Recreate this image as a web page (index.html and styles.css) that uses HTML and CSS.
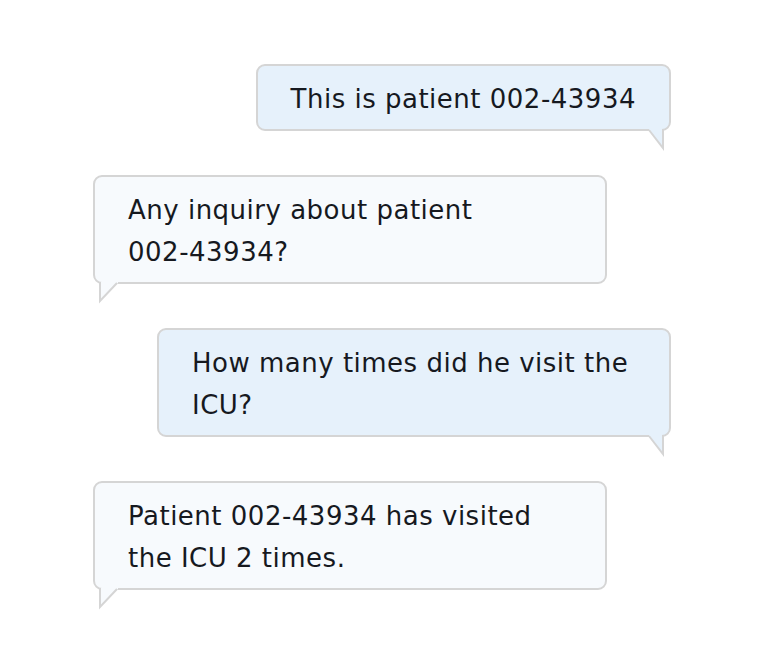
FILE: index.html
```html
<!DOCTYPE html>
<html lang="en">
<head>
<meta charset="utf-8">
<title>Chat</title>
<link rel="stylesheet" href="styles.css">
</head>
<body>
<main class="chat">
  <div class="bubble user">
    <p class="text">This is patient <span class="id">002-43934</span></p>
    <svg class="tail" width="16" height="20" viewBox="0 0 16 20"><polygon points="0,0 15,0 15,1 14,19 0,1" class="tail-fill"/><polyline points="0,1 14,19 14,0" class="tail-line"/></svg>
  </div>
  <div class="bubble bot">
    <p class="text">Any inquiry about patient <span class="id">002-43934?</span></p>
    <svg class="tail" width="20" height="20" viewBox="0 0 20 20"><polygon points="1,0 20,0 20,1 2,19" class="tail-fill"/><polyline points="19,1 2,19 2,0" class="tail-line"/></svg>
  </div>
  <div class="bubble user">
    <p class="text">How many times did he visit the ICU?</p>
    <svg class="tail" width="16" height="20" viewBox="0 0 16 20"><polygon points="0,0 15,0 15,1 14,19 0,1" class="tail-fill"/><polyline points="0,1 14,19 14,0" class="tail-line"/></svg>
  </div>
  <div class="bubble bot">
    <p class="text">Patient <span class="id">002-43934</span> has visited the ICU 2 times.</p>
    <svg class="tail" width="20" height="20" viewBox="0 0 20 20"><polygon points="1,0 20,0 20,1 2,19" class="tail-fill"/><polyline points="19,1 2,19 2,0" class="tail-line"/></svg>
  </div>
</main>
</body>
</html>
```
FILE: styles.css
```css
html, body {
  margin: 0;
  padding: 0;
  background: #ffffff;
}
body {
  font-family: "DejaVu Sans", "Open Sans", sans-serif;
  color: #16191f;
  min-height: 654px;
}
.chat {
  width: 578px;
  margin: 0 0 0 93px;
  padding: 64px 0 60px;
  display: flex;
  flex-direction: column;
  gap: 44px;
}
.bubble {
  position: relative;
  box-sizing: border-box;
  max-width: 514px;
  border: 2px solid #d5d5d5;
  border-radius: 9px;
  padding: 12px 33px 9px 33px;
}
.bubble.user {
  align-self: flex-end;
  background: #e6f1fb;
}
.bubble.bot {
  align-self: flex-start;
  background: #f7fafd;
}
.text {
  margin: 0;
  font-size: 26px;
  line-height: 42px;
  letter-spacing: 0.5px;
}
.id {
  white-space: nowrap;
}
.tail {
  position: absolute;
  bottom: -20px;
  display: block;
  overflow: visible;
}
.user .tail {
  right: 4px;
}
.bot .tail {
  left: 3px;
}
.user .tail-fill { fill: #e6f1fb; }
.bot .tail-fill { fill: #f7fafd; }
.tail-line {
  fill: none;
  stroke: #d5d5d5;
  stroke-width: 2;
}
```
